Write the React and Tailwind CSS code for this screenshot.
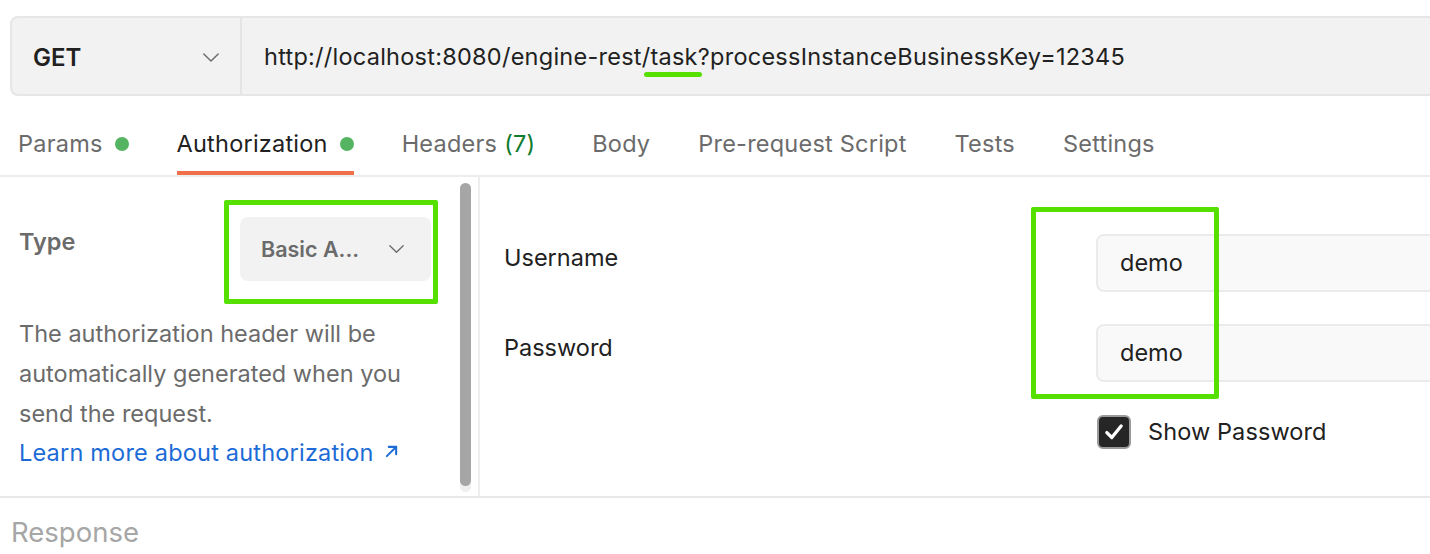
import React from 'react';

const Chevron = ({ className }) => (
  <svg viewBox="0 0 20 12" className={className} fill="none" stroke="currentColor" strokeWidth="1.6" strokeLinecap="round" strokeLinejoin="round">
    <polyline points="2,2 10,10 18,2" />
  </svg>
);

const Tab = ({ label, active, dot, extra, className = '' }) => (
  <div className={`flex flex-col ${className}`}>
    <div className={`flex items-center h-[28px] leading-[28px] text-[23.5px] tracking-[0.22px] ${active ? 'text-[#212121]' : 'text-[#6b6b6b]'}`}>
      <span>{label}</span>
      {extra && <span className="ml-[7px] text-[#0f7b2f]">{extra}</span>}
      {dot && <span className="ml-[12px] w-[14px] h-[14px] rounded-full bg-[#55b461]"></span>}
    </div>
    <div className={`mt-[13px] h-[4px] ${active ? 'bg-[#f0704a]' : 'bg-transparent'}`}></div>
  </div>
);

export default function App() {
  return (
    <div className="w-[1430px] h-[554px] bg-white overflow-hidden relative font-['Inter',sans-serif]">
      {/* URL bar */}
      <div className="pt-[16px] pl-[10px]">
        <div className="flex h-[80px] -mr-[20px] border-2 border-[#e6e6e6] bg-[#f2f2f2] rounded-l-[8px]">
          <div className="w-[230px] flex items-center justify-between pl-[21px] pr-[20px] pt-[3px] border-r-2 border-[#e4e4e4]">
            <span className="text-[24px] font-semibold text-[#212121]">GET</span>
            <Chevron className="w-[18px] h-[11px] text-[#6b6b6b]" />
          </div>
          <div className="flex items-center pl-[22px] pt-[2px] text-[23.5px] text-[#212121] tracking-[0.25px]">
            <span>http://localhost:8080/engine-rest/</span>
            <span className="relative">
              task
              <span className="absolute left-[-6px] right-[-4px] top-[33px] h-[5px] rounded-full bg-[#55e000]"></span>
            </span>
            <span>?processInstanceBusinessKey=12345</span>
          </div>
        </div>
      </div>

      {/* Tabs */}
      <div className="flex pt-[34px] pl-[18px] gap-[48px] border-b-2 border-[#ededed]">
        <Tab label="Params" dot />
        <Tab label="Authorization" dot active />
        <Tab label="Headers" extra="(7)" className="pr-[9px]" />
        <Tab label="Body" />
        <Tab label="Pre-request Script" />
        <Tab label="Tests" />
        <Tab label="Settings" />
      </div>

      {/* Auth body */}
      <div className="flex h-[321px] border-b-2 border-[#e8e8e8]">
        <div className="w-[480px] flex border-r-2 border-[#ededed]">
          <div className="flex-1 pl-[19px] pt-[40px]">
            <div className="flex items-start">
              <span className="w-[221px] pt-[11px] leading-[28px] text-[23.5px] font-semibold text-[#6b6b6b]">Type</span>
              <div className="w-[191px] h-[64px] rounded-[8px] bg-[#f2f2f2] flex items-center justify-between pl-[21px] pr-[26px]">
                <span className="text-[21.5px] font-semibold text-[#6b6b6b]">Basic A...</span>
                <Chevron className="w-[17px] h-[10px] text-[#6b6b6b]" />
              </div>
            </div>
            <p className="mt-[33px] w-[420px] text-[23.5px] leading-[40px] text-[#6b6b6b]">
              The authorization header will be automatically generated when you send the request.
            </p>
            <a className="flex items-center text-[23.5px] leading-[38px] tracking-[0.2px] text-[#1d6bd6]">
              Learn more about authorization
              <svg viewBox="0 0 14 14" className="ml-[11px] w-[13px] h-[13px] mb-[4px]" fill="none" stroke="currentColor" strokeWidth="2.2" strokeLinecap="round" strokeLinejoin="round">
                <line x1="2" y1="12" x2="12" y2="2" />
                <polyline points="4,2 12,2 12,10" />
              </svg>
            </a>
          </div>
          <div className="w-[11px] mr-[7px] mt-[6px] h-[309px] rounded-full bg-[#efefef] flex flex-col">
            <div className="h-[303px] rounded-full bg-[#a6a6a6]"></div>
          </div>
        </div>

        <div className="flex-1 pl-[24px] pt-[57px]">
          <div className="flex items-start">
            <span className="w-[592px] pt-[10px] leading-[28px] text-[23.5px] text-[#212121]">Username</span>
            <div className="flex-1 -mr-[20px] h-[58px] rounded-[8px] border-2 border-[#ebebeb] bg-[#f9f9f9] flex items-center pl-[22px] text-[23.5px] text-[#212121]">demo</div>
          </div>
          <div className="flex items-start mt-[32px]">
            <span className="w-[592px] pt-[10px] leading-[28px] text-[23.5px] text-[#212121]">Password</span>
            <div className="flex-1 -mr-[20px] h-[58px] rounded-[8px] border-2 border-[#ebebeb] bg-[#f9f9f9] flex items-center pl-[22px] text-[23.5px] text-[#212121]">demo</div>
          </div>
          <div className="flex items-center mt-[32px] ml-[593px]">
            <div className="w-[34px] h-[34px] rounded-[6px] bg-[#262626] border-2 border-[#9a9a9a] flex items-center justify-center">
              <svg viewBox="0 0 20 20" className="w-[22px] h-[22px]" fill="none" stroke="white" strokeWidth="3" strokeLinecap="round" strokeLinejoin="round">
                <polyline points="3.5,10.5 8,15 16.5,4.5" />
              </svg>
            </div>
            <span className="ml-[17px] text-[23.5px] tracking-[0.1px] text-[#212121]">Show Password</span>
          </div>
        </div>
      </div>

      {/* Response */}
      <div className="pl-[11px] pt-[17px] text-[27.5px] leading-[34px] text-[#a6a6a6]">Response</div>

      {/* Annotation boxes */}
      <div className="absolute left-[224px] top-[200px] w-[214px] h-[104px] border-[5px] border-[#55e000] rounded-[2px]"></div>
      <div className="absolute left-[1031px] top-[207px] w-[188px] h-[192px] border-[5px] border-[#55e000] rounded-[2px]"></div>
    </div>
  );
}
